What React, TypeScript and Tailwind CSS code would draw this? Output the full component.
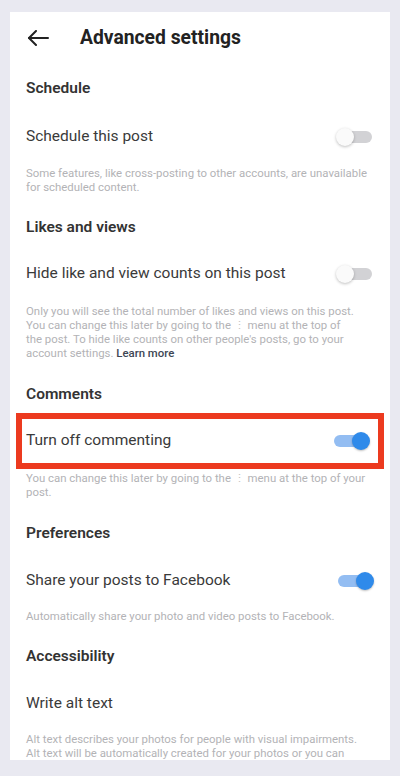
import React from "react";

const font = { fontFamily: "Roboto, 'Noto Sans', Arial, sans-serif" };

function Toggle({ on }: { on: boolean }) {
  if (on) {
    return (
      <div className="relative w-[38px] h-[20px] shrink-0">
        <div className="absolute left-[2px] right-[6px] top-[4px] h-[12px] rounded-full bg-[#93bdf2]" />
        <div className="absolute right-0 top-[1px] w-[18px] h-[18px] rounded-full bg-[#2f8aea] shadow-[0_1px_2px_rgba(0,0,0,0.25)]" />
      </div>
    );
  }
  return (
    <div className="relative w-[38px] h-[20px] shrink-0">
      <div className="absolute left-[8px] right-[2px] top-[4px] h-[12px] rounded-full bg-[#d2d2d5]" />
      <div className="absolute left-0 top-[1px] w-[18px] h-[18px] rounded-full bg-[#fafafa] shadow-[0_1px_3px_rgba(0,0,0,0.25)]" />
    </div>
  );
}

function SectionHeader({ children, mt }: { children: React.ReactNode; mt: string }) {
  return (
    <div className={`${mt} px-4 h-[24px] flex items-center text-[15.5px] font-semibold text-[#333333]`}>
      {children}
    </div>
  );
}

function Row({ label, on, mt }: { label: string; on?: boolean; mt: string }) {
  return (
    <div className={`${mt} pl-4 pr-[16px] h-[36px] flex items-center justify-between`}>
      <span className="text-[15.5px] text-[#3a3a3a]">{label}</span>
      {on !== undefined && <Toggle on={on} />}
    </div>
  );
}

function Desc({ lines, mt }: { lines: React.ReactNode[]; mt: string }) {
  return (
    <div className={`${mt} px-4 text-[11.4px] leading-[14px] text-[#b3b3b6]`}>
      {lines.map((l, i) => (
        <div key={i} className="whitespace-nowrap">
          {l}
        </div>
      ))}
    </div>
  );
}

const Dots = () => <span className="text-[#c4c4c4]">⋮</span>;

export default function App() {
  return (
    <div className="w-[400px] h-[776px] bg-[#e9e9f1] pt-[12px] overflow-hidden" style={font}>
      <div className="mx-[10px] h-[748px] pt-[1px] bg-white overflow-hidden">
        {/* Header */}
        <div className="h-[50px] flex items-center pl-[17px]">
          <svg width="22" height="16" viewBox="0 0 22 16" fill="none" stroke="#222" strokeWidth="2" strokeLinecap="round" strokeLinejoin="round">
            <path d="M21 8H2" />
            <path d="M9 1L2 8l7 7" />
          </svg>
          <span className="ml-[31px] text-[19.3px] font-bold text-[#222222]">Advanced settings</span>
        </div>

        {/* Schedule */}
        <SectionHeader mt="mt-[14px]">Schedule</SectionHeader>
        <Row mt="mt-[18px]" label="Schedule this post" on={false} />
        <Desc
          mt="mt-[11px]"
          lines={["Some features, like cross-posting to other accounts, are unavailable", "for scheduled content."]}
        />

        {/* Likes and views */}
        <SectionHeader mt="mt-[22px]">Likes and views</SectionHeader>
        <Row mt="mt-[16px]" label="Hide like and view counts on this post" on={false} />
        <Desc
          mt="mt-[12px]"
          lines={[
            "Only you will see the total number of likes and views on this post.",
            <>
              You can change this later by going to the <Dots /> menu at the top of
            </>,
            "the post. To hide like counts on other people's posts, go to your",
            <>
              account settings. <span className="font-medium text-[#3d4654]">Learn more</span>
            </>,
          ]}
        />

        {/* Comments */}
        <SectionHeader mt="mt-[23px]">Comments</SectionHeader>
        <div className="mt-[6px] mx-[6px] h-[56px] border-[6px] border-[#ec3a1f] pl-[4px] pr-[8px] flex items-center justify-between">
          <span className="text-[15.5px] text-[#3a3a3a]">Turn off commenting</span>
          <Toggle on={true} />
        </div>
        <Desc
          mt="mt-[2px]"
          lines={[
            <>
              You can change this later by going to the <Dots /> menu at the top of your
            </>,
            "post.",
          ]}
        />

        {/* Preferences */}
        <SectionHeader mt="mt-[23px]">Preferences</SectionHeader>
        <Row mt="mt-[17px]" label="Share your posts to Facebook" on={true} />
        <Desc mt="mt-[10px]" lines={["Automatically share your photo and video posts to Facebook."]} />

        {/* Accessibility */}
        <SectionHeader mt="mt-[22px]">Accessibility</SectionHeader>
        <Row mt="mt-[17px]" label="Write alt text" />
        <Desc
          mt="mt-[10px]"
          lines={[
            "Alt text describes your photos for people with visual impairments.",
            "Alt text will be automatically created for your photos or you can",
          ]}
        />
      </div>
    </div>
  );
}
